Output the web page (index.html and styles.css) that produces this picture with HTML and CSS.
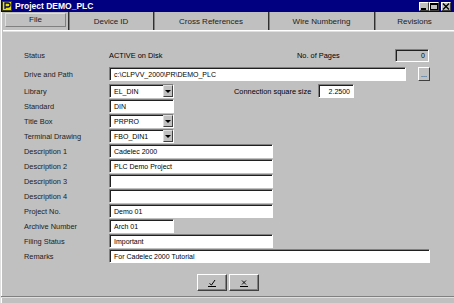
FILE: index.html
```html
<!DOCTYPE html>
<html lang="en">
<head>
    <meta charset="UTF-8">
    <title>Project DEMO_PLC</title>
    <link rel="stylesheet" href="styles.css">
</head>
<body>

    <div class="window">

        <!-- Barra de título -->
        <div class="titlebar">
            <svg class="app-icon" width="10" height="10" viewBox="0 0 10 10">
                <rect x="0.5" y="0.5" width="9" height="9" fill="#e8e000" stroke="#404000"/>
                <path d="M3 8 V2 H6 Q8 2 8 4 Q8 6 6 6 H3" fill="none" stroke="#000080" stroke-width="1.3"/>
            </svg>
            <span class="title">Project DEMO_PLC</span>
            <div class="controls">
                <span class="ctl">
                    <svg width="8" height="7" viewBox="0 0 8 7"><rect x="1" y="5" width="5" height="2" fill="#000"/></svg>
                </span>
                <span class="ctl">
                    <svg width="8" height="7" viewBox="0 0 8 7"><rect x="0.5" y="0.5" width="7" height="6" fill="none" stroke="#000"/><rect x="0" y="0" width="8" height="2" fill="#000"/></svg>
                </span>
                <span class="ctl close">
                    <svg width="8" height="7" viewBox="0 0 8 7"><path d="M1 0.5 L7 6.5 M7 0.5 L1 6.5" stroke="#000" stroke-width="1.4"/></svg>
                </span>
            </div>
        </div>

        <!-- Abas -->
        <div class="tabs">
            <div class="tab tab-file active"><span>File</span></div>
            <div class="tab tab-device">Device ID</div>
            <div class="tab tab-cross">Cross References</div>
            <div class="tab tab-wire">Wire Numbering</div>
            <div class="tab tab-rev">Revisions</div>
        </div>

        <!-- Formulário -->
        <div class="form">
            <div class="row status-row">
                <span class="label">Status</span>
                <span class="status-value">ACTIVE on Disk</span>
                <span class="pages-label">No. of Pages</span>
                <span class="field pages-box">0</span>
            </div>

            <div class="row drive-row">
                <span class="label">Drive and Path</span>
                <span class="field path-field">c:\CLPVV_2000\PR\DEMO_PLC</span>
                <span class="browse-btn">...</span>
            </div>

            <div class="row">
                <span class="label">Library</span>
                <span class="field combo">EL_DIN<span class="drop"><i></i></span></span>
                <span class="conn-label">Connection square size</span>
                <span class="field conn-field">2.2500</span>
            </div>

            <div class="row">
                <span class="label">Standard</span>
                <span class="field short">DIN</span>
            </div>

            <div class="row">
                <span class="label">Title Box</span>
                <span class="field combo">PRPRO<span class="drop"><i></i></span></span>
            </div>

            <div class="row">
                <span class="label">Terminal Drawing</span>
                <span class="field combo">FBO_DIN1<span class="drop"><i></i></span></span>
            </div>

            <div class="row">
                <span class="label">Description 1</span>
                <span class="field medium">Cadelec 2000</span>
            </div>

            <div class="row">
                <span class="label">Description 2</span>
                <span class="field medium">PLC Demo Project</span>
            </div>

            <div class="row">
                <span class="label">Description 3</span>
                <span class="field medium"></span>
            </div>

            <div class="row">
                <span class="label">Description 4</span>
                <span class="field medium"></span>
            </div>

            <div class="row">
                <span class="label">Project No.</span>
                <span class="field medium">Demo 01</span>
            </div>

            <div class="row">
                <span class="label">Archive Number</span>
                <span class="field short">Arch 01</span>
            </div>

            <div class="row">
                <span class="label">Filing Status</span>
                <span class="field medium">Important</span>
            </div>

            <div class="row">
                <span class="label">Remarks</span>
                <span class="field long">For Cadelec 2000 Tutorial</span>
            </div>
        </div>

        <!-- Botões OK / Cancelar -->
        <div class="actions">
            <span class="btn">
                <svg width="10" height="8" viewBox="0 0 10 8">
                    <path d="M2.5 4.5 L4.5 6 L8 1" fill="none" stroke="#000" stroke-width="1"/>
                    <path d="M1 7.5 H9" stroke="#000"/>
                </svg>
            </span>
            <span class="btn">
                <svg width="10" height="8" viewBox="0 0 10 8">
                    <path d="M3 1.5 L7 5.5 M7 1.5 L3 5.5" fill="none" stroke="#000" stroke-width="0.9"/>
                    <path d="M1 7.5 H9" stroke="#000"/>
                </svg>
            </span>
        </div>

        <div class="footer"></div>
    </div>

</body>
</html>
```

FILE: styles.css
```css
body {
    margin: 0;
    padding: 0;
    background-color: #c0c0c0;
}

.window {
    width: 454px;
    height: 303px;
    box-sizing: border-box;
    background-color: #c0c0c0;
    border-left: 1px solid #dfdfdf;
    box-shadow: inset 1px 0 0 #ffffff;
    font-family: "Liberation Sans", Arial, sans-serif;
    font-size: 7px;
    color: #000;
    display: flex;
    flex-direction: column;
    overflow: hidden;
}

/* Barra de título */
.titlebar {
    height: 12px;
    background-color: #000080;
    display: flex;
    align-items: center;
    padding: 0 3px 0 1px;
    color: #fff;
}

.app-icon {
    display: block;
    margin-right: 3px;
}

.title {
    font-weight: bold;
    font-size: 8.5px;
}

.controls {
    margin-left: auto;
    display: flex;
}

.ctl {
    width: 10px;
    height: 9px;
    box-sizing: border-box;
    background-color: #c0c0c0;
    border: 1px solid;
    border-color: #fff #404040 #404040 #fff;
    display: flex;
    align-items: center;
    justify-content: center;
}

.ctl svg {
    display: block;
}

.ctl.close {
    margin-left: 2px;
}

/* Abas */
.tabs {
    height: 18px;
    display: flex;
    margin-left: 2px;
    border-bottom: 1px solid #ffffff;
    box-shadow: 0 1px 0 #dfdfdf;
    font-size: 8px;
}

.tab {
    box-sizing: border-box;
    display: flex;
    align-items: center;
    justify-content: center;
    border-left: 1px solid #303030;
    box-shadow: inset 1px 0 0 #808080;
    color: #202020;
}

.tab-file {
    width: 65px;
    border-left: none;
    box-shadow: none;
    padding: 1px 2px 4px 2px;
}

.tab-file span {
    flex: 1;
    height: 12px;
    display: flex;
    align-items: center;
    justify-content: center;
    border: 1px solid;
    border-color: #dfdfdf #808080 #808080 #dfdfdf;
}

.tab-device { width: 85px; }
.tab-cross  { width: 115px; }
.tab-wire   { width: 106px; }
.tab-rev    { width: 80px; }

/* Formulário */
.form {
    margin-top: 18px;
    padding-left: 23px;
    display: flex;
    flex-direction: column;
}

.row {
    display: flex;
    align-items: center;
    height: 14px;
    margin-bottom: 1px;
    font-size: 7.4px;
}

.label {
    width: 85px;
    flex-shrink: 0;
    color: #202020;
}

.field {
    height: 14px;
    box-sizing: border-box;
    background-color: #fff;
    border: 1px solid;
    border-color: #808080 #ffffff #ffffff #808080;
    box-shadow: inset 1px 1px 0 #202020;
    padding-left: 4px;
    display: flex;
    align-items: center;
    position: relative;
    white-space: nowrap;
    font-size: 7px;
}

.status-row {
    height: 13px;
    margin-bottom: 5px;
}

.status-value {
    width: 188px;
}

.pages-label {
    width: 98px;
}

.pages-box {
    width: 34px;
    height: 13px;
    background-color: #c0c0c0;
    justify-content: flex-end;
    padding-right: 3px;
}

.drive-row {
    margin-bottom: 3px;
}

.path-field {
    width: 297px;
}

.browse-btn {
    width: 12px;
    height: 14px;
    margin-left: 12px;
    box-sizing: border-box;
    border: 1px solid;
    border-color: #fff #404040 #404040 #fff;
    display: flex;
    align-items: center;
    justify-content: center;
    font-size: 7px;
    line-height: 7px;
    color: #000;
}

.combo,
.short {
    width: 65px;
}

.drop {
    position: absolute;
    right: 0;
    top: 0;
    bottom: 0;
    width: 10px;
    box-sizing: border-box;
    background-color: #c0c0c0;
    border: 1px solid;
    border-color: #dfdfdf #404040 #404040 #dfdfdf;
    display: flex;
    align-items: center;
    justify-content: center;
}

.drop i {
    width: 0;
    height: 0;
    border-left: 3px solid transparent;
    border-right: 3px solid transparent;
    border-top: 3px solid #000;
}

.conn-label {
    margin-left: 60px;
    width: 84px;
}

.conn-field {
    width: 36px;
    justify-content: flex-end;
    padding-right: 3px;
}

.medium {
    width: 164px;
}

.long {
    width: 321px;
}

/* Botões */
.actions {
    display: flex;
    margin-top: 10px;
    padding-left: 196px;
    gap: 2px;
}

.btn {
    width: 30px;
    height: 17px;
    box-sizing: border-box;
    border: 1px solid;
    border-color: #fff #404040 #404040 #fff;
    box-shadow: inset -1px -1px 0 #808080;
    display: flex;
    align-items: center;
    justify-content: center;
}

.btn svg {
    display: block;
}

.footer {
    margin-top: auto;
    height: 6px;
    border-top: 1px solid #808080;
    box-shadow: inset 0 1px 0 #dfdfdf;
}
```
